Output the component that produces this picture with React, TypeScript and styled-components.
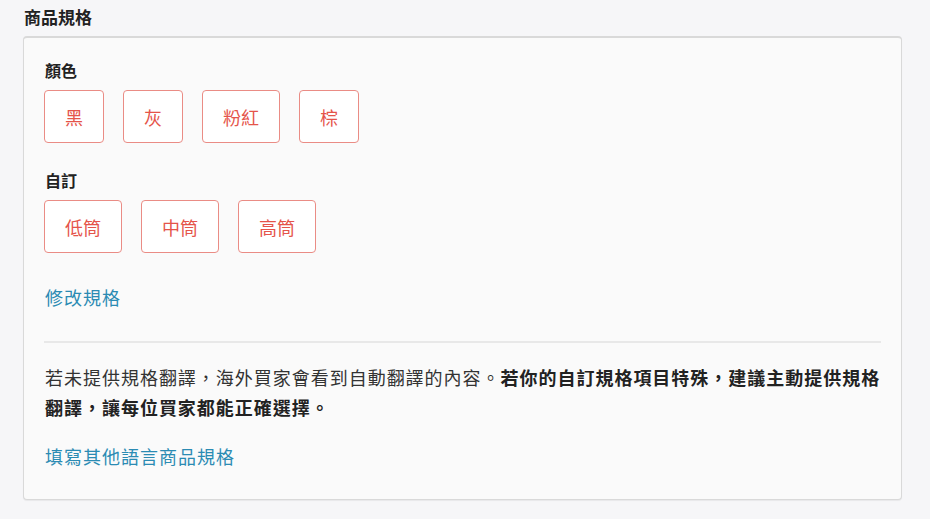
import React from "react";
import styled, { createGlobalStyle } from "styled-components";

const GlobalStyle = createGlobalStyle`
  html, body {
    margin: 0;
    padding: 0;
    background: #f6f6f8;
    font-family: "Noto Sans CJK TC", "Noto Sans", sans-serif;
    color: #333;
  }
`;

const Page = styled.div`
  padding: 5px 28px 18px 23px;
  width: 930px;
  box-sizing: border-box;
`;

const Title = styled.h2`
  margin: 0 0 7px 1px;
  font-size: 17px;
  line-height: 24px;
  font-weight: 700;
  color: #222;
`;

const Card = styled.section`
  background: #fafafa;
  border: 1px solid #d9d9d9;
  border-top-width: 2px;
  border-radius: 4px;
  box-shadow: 0 1px 1px rgba(0, 0, 0, 0.06);
  padding: 21px 20px 30px 20px;
  display: flex;
  flex-direction: column;
`;

const Group = styled.div`
  display: flex;
  flex-direction: column;
  gap: 9px;
  & + & {
    margin-top: 26px;
  }
`;

const Label = styled.div`
  margin-left: 1px;
  font-size: 16px;
  line-height: 22px;
  font-weight: 700;
  color: #222;
`;

const ChipRow = styled.div`
  display: flex;
  gap: 19px;
`;

const Chip = styled.button`
  height: 53px;
  padding: 0 20px;
  border: 1px solid #ea8c85;
  border-radius: 4px;
  background: #fff;
  color: #e5544a;
  font-family: inherit;
  font-size: 18px;
  cursor: pointer;
`;

const Link = styled.a<{ $top: number }>`
  margin-top: ${(p) => p.$top}px;
  margin-left: 1px;
  font-size: 18px;
  line-height: 26px;
  color: #2b8bb3;
  text-decoration: none;
  letter-spacing: 1px;
  cursor: pointer;
`;

const Divider = styled.hr`
  margin: 31px 0 0;
  width: 100%;
  border: none;
  height: 2px;
  background: #e8e8e8;
`;

const Note = styled.p`
  margin: 19px -6px 0 1px;
  font-size: 18px;
  line-height: 30px;
  letter-spacing: 0.98px;
  color: #333;
  strong {
    font-weight: 700;
    color: #222;
  }
`;

const groups = [
  { name: "顏色", options: ["黑", "灰", "粉紅", "棕"] },
  { name: "自訂", options: ["低筒", "中筒", "高筒"] },
];

export default function App() {
  return (
    <Page>
      <GlobalStyle />
      <Title>商品規格</Title>
      <Card>
        {groups.map((g) => (
          <Group key={g.name}>
            <Label>{g.name}</Label>
            <ChipRow>
              {g.options.map((o) => (
                <Chip key={o}>{o}</Chip>
              ))}
            </ChipRow>
          </Group>
        ))}
        <Link $top={31}>修改規格</Link>
        <Divider />
        <Note>
          若未提供規格翻譯，海外買家會看到自動翻譯的內容。
          <strong>若你的自訂規格項目特殊，建議主動提供規格翻譯，讓每位買家都能正確選擇。</strong>
        </Note>
        <Link $top={21}>填寫其他語言商品規格</Link>
      </Card>
    </Page>
  );
}
